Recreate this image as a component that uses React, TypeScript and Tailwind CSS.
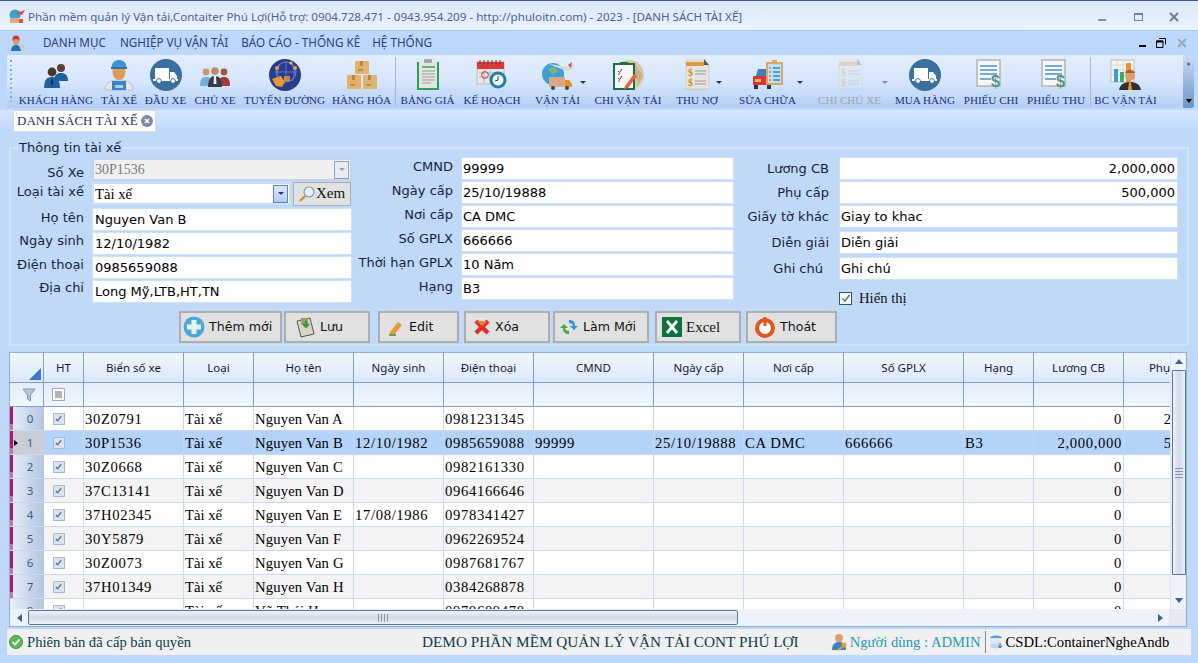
import type { ReactNode } from "react";

const tahoma = "font-['Noto_Sans',sans-serif]";
const verdana = "font-['DejaVu_Sans',sans-serif]";
const times = "font-['Liberation_Serif',serif]";

const Truck = () => (
  <svg viewBox="0 0 32 32" className="h-8 w-8">
    <circle cx="16" cy="16" r="16" fill="#3a6f9e" />
    <rect x="5" y="9" width="14" height="12" fill="#fff" />
    <path d="M20 13h4l3 4v4h-7z" fill="#fff" />
    <rect x="3" y="20" width="25" height="2" fill="#fff" />
    <circle cx="9" cy="22" r="2.4" fill="#fff" stroke="#3a6f9e" />
    <circle cx="23" cy="22" r="2.4" fill="#fff" stroke="#3a6f9e" />
  </svg>
);

const DocDollar = ({ pale }: { pale?: boolean }) => (
  <svg viewBox="0 0 32 32" className={pale ? "h-8 w-8 opacity-30" : "h-8 w-8"}>
    <ellipse cx="15" cy="30" rx="13" ry="1.5" fill="#c8c8c8" />
    <path d="M5 1h19l4 5v24H5z" fill="#e4e4e0" stroke="#cfcfcf" />
    <path d="M23 0l5 6h-5z" fill="#555" />
    <rect x="5" y="3" width="18" height="4" fill="#e29a38" />
    <text x="7" y="17" fontSize="10" fontWeight="700" fill="#d98a20">$</text>
    <text x="7" y="27" fontSize="10" fontWeight="700" fill="#d98a20">$</text>
    <path d="M14 12h11M14 15h11M14 22h11M14 25h11" stroke="#9a9a9a" />
  </svg>
);

const Receipt = () => (
  <svg viewBox="0 0 32 32" className="h-8 w-8">
    <rect x="2" y="1" width="23" height="26" fill="#f7f7f7" stroke="#b4b4b4" strokeWidth="1.5" />
    <path d="M5 7h17M5 11h17M5 15h17M5 20h11" stroke="#4a90d0" strokeWidth="1.6" />
    <text x="16" y="28" fontSize="16" fontWeight="700" fill="#4f9a86" fontFamily="Liberation Sans">$</text>
  </svg>
);

const toolIcons: Record<string, ReactNode> = {
  customer: (
    <svg viewBox="0 0 32 32" className="h-8 w-8">
      <circle cx="21" cy="9" r="4" fill="#5a4030" />
      <path d="M14 22c0-6 3-8 7-8s7 2 7 8z" fill="#1f5f9c" />
      <circle cx="12" cy="13" r="4.4" fill="#4a3528" />
      <path d="M4 29c0-8 3-11 8-11s8 3 8 11z" fill="#215f9e" />
      <path d="M12 18l-1.2 6 1.2 3 1.2-3z" fill="#16324f" />
    </svg>
  ),
  driver: (
    <svg viewBox="0 0 32 32" className="h-8 w-8">
      <path d="M2 31c0-7 5-10 14-10s14 3 14 10z" fill="#e6e6e6" stroke="#999" strokeWidth=".5" />
      <path d="M9 22h14v9H9z" fill="#3b83c4" />
      <rect x="12" y="26" width="8" height="3" fill="#fff" opacity=".6" />
      <ellipse cx="16" cy="13" rx="6.5" ry="8" fill="#dd9a58" />
      <path d="M8.5 9c0-6 4-8 7.500-8s7.500 2 7.500 8z" fill="#3f92d2" />
      <rect x="8" y="8" width="16" height="2" fill="#2a74b0" />
    </svg>
  ),
  truck: <Truck />,
  owner: (
    <svg viewBox="0 0 32 32" className="h-8 w-8">
      <circle cx="7" cy="13" r="3.4" fill="#c99570" />
      <path d="M1 27c0-7 2-9 6-9s6 2 6 9z" fill="#74aede" />
      <circle cx="25" cy="13" r="3.4" fill="#9a5a3a" />
      <path d="M19 27c0-7 2-9 6-9s6 2 6 9z" fill="#a83838" />
      <circle cx="16" cy="12" r="3.800" fill="#c08a64" />
      <path d="M9 28c0-8 3-11 7-11s7 3 7 11z" fill="#3a3a42" />
      <path d="M15 17h2l.5 8h-3z" fill="#eee" />
    </svg>
  ),
  route: (
    <svg viewBox="0 0 32 32" className="h-8 w-8">
      <circle cx="16" cy="16" r="16" fill="#2a3a8c" />
      <circle cx="17" cy="13" r="10" fill="none" stroke="#6f86d8" />
      <path d="M7 13h20M17 3v20M11 5c-3 6-3 11 0 17M23 5c3 6 3 11 0 17" stroke="#6f86d8" fill="none" strokeWidth=".8" />
      <circle cx="8" cy="9" r="2" fill="#e8a23a" />
      <circle cx="22" cy="4" r="1.600" fill="#f0c040" />
      <circle cx="26" cy="9" r="2" fill="#e8a23a" />
      <path d="M3 20l9-3 4 6-3 5-6-1z" fill="#e89a32" />
      <rect x="15" y="17" width="6" height="5" fill="#c98a3a" />
    </svg>
  ),
  goods: (
    <svg viewBox="0 0 32 32" className="h-8 w-8">
      <rect x="9" y="2" width="14" height="13" rx="1" fill="#e0b36e" />
      <rect x="1" y="16" width="14" height="14" rx="1" fill="#e6b066" />
      <rect x="17" y="16" width="14" height="14" rx="1" fill="#e0b36e" />
      <path d="M14 2h3v5h-3zM6 16h3v5H6zM22 16h3v5h-3z" fill="#b8864a" />
      <path d="M12 11h5M4 26h5M20 26h5" stroke="#8a6a3a" />
    </svg>
  ),
  price: (
    <svg viewBox="0 0 32 32" className="h-8 w-8">
      <rect x="5" y="3" width="22" height="28" fill="#2f9e58" />
      <rect x="7" y="2" width="18" height="27" fill="#e3e6e2" />
      <rect x="12" y="0" width="8" height="4" rx="1" fill="#a8a8a8" />
      <path d="M10 8h13" stroke="#2f9e58" strokeWidth="1.4" />
      <path d="M10 12h13M10 15h13M10 18h13M10 21h13M10 24h9" stroke="#9a9a9a" />
    </svg>
  ),
  plan: (
    <svg viewBox="0 0 32 32" className="h-8 w-8">
      <rect x="1" y="3" width="27" height="22" fill="#e8e8e8" stroke="#bbb" />
      <rect x="1" y="3" width="27" height="7" fill="#d83a3a" />
      <path d="M4 1v4M8 1v4M12 1v4M16 1v4M20 1v4M24 1v4" stroke="#7a2a2a" />
      <path d="M3 14h22M3 18h22M8 11v13M14 11v13" stroke="#b8b8b8" />
      <circle cx="9" cy="16" r="3.400" fill="none" stroke="#c83a3a" />
      <circle cx="22" cy="21" r="8.500" fill="#1f7f9c" />
      <circle cx="22" cy="21" r="5.500" fill="#f0f4f8" />
      <path d="M22 17v4l-3 1" stroke="#345" fill="none" />
    </svg>
  ),
  transport: (
    <svg viewBox="0 0 32 32" className="h-8 w-8">
      <circle cx="11" cy="15" r="11" fill="#3f9fd0" />
      <path d="M6 10l7-2 3 4-5 4z" fill="#7fb07a" />
      <path d="M6 5l22 3 4-4-1 6-6 2z" fill="#d8d8d8" />
      <path d="M26 6l4-3-1 6z" fill="#d8503a" />
      <rect x="7" y="18" width="16" height="10" fill="#d8a98a" />
      <path d="M23 21h4l3 4v3h-7z" fill="#e8901f" />
      <circle cx="11" cy="29" r="2" fill="#345" />
      <circle cx="25" cy="29" r="2" fill="#345" />
    </svg>
  ),
  expense: (
    <svg viewBox="0 0 32 32" className="h-8 w-8">
      <circle cx="17" cy="16" r="15" fill="#d9c7a2" />
      <path d="M22 4l9 12-4 9-8-14z" fill="#c2ab82" opacity=".7" />
      <rect x="2" y="5" width="20" height="25" fill="#f7f7f7" stroke="#1d6b48" strokeWidth="2" />
      <rect x="8" y="3" width="8" height="3" fill="#1d6b48" />
      <path d="M6 12l1.500 1.500L10 10M6 19l1.500 1.500L10 17" stroke="#444" fill="none" />
      <path d="M6 15h2M6 22h2" stroke="#d83a3a" />
      <path d="M13 27l9-12 3 2-9 12-4 1z" fill="#d8683a" />
    </svg>
  ),
  debt: <DocDollar />,
  repair: (
    <svg viewBox="0 0 32 32" className="h-8 w-8">
      <path d="M4 17l2-7h11v7z" fill="#3d7fc0" />
      <rect x="1" y="17" width="20" height="9" rx="1" fill="#d8323a" />
      <rect x="3" y="20" width="6" height="3" fill="#f0c040" />
      <rect x="2" y="26" width="4" height="4" fill="#333" />
      <rect x="15" y="26" width="4" height="4" fill="#333" />
      <rect x="14" y="3" width="17" height="23" rx="1" fill="#d9a860" />
      <rect x="16" y="5" width="13" height="19" fill="#bfe2f2" />
      <rect x="20" y="1" width="5" height="4" fill="#d9a860" />
      <path d="M21 9h7M21 13h7M21 17h7M21 21h7" stroke="#2a8ac8" strokeWidth="1.500" />
      <path d="M17 9h2M17 13h2M17 17h2M17 21h2" stroke="#e0782a" strokeWidth="1.500" />
    </svg>
  ),
  paleDoc: <DocDollar pale />,
  receipt: <Receipt />,
  report: (
    <svg viewBox="0 0 32 32" className="h-8 w-8">
      <rect x="1" y="1" width="23" height="22" fill="#f5f5f5" stroke="#bbb" />
      <path d="M1 6h23M1 11h23M1 16h23M7 1v22M13 1v22M19 1v22" stroke="#d8d8d8" />
      <rect x="4" y="10" width="4" height="13" fill="#3a9fd0" />
      <rect x="10" y="13" width="4" height="10" fill="#3fae5a" />
      <rect x="16" y="4" width="5" height="19" fill="#e8922a" />
      <circle cx="20" cy="17" r="5" fill="#d8a070" />
      <path d="M15 14c0-4 10-4 10 0z" fill="#a8601f" />
      <path d="M9 31c1-6 6-8 11-8s10 2 11 8z" fill="#2f2f33" />
      <path d="M19 23h2l1 8h-4z" fill="#e8922a" />
    </svg>
  ),
};

const tools = [
  { label: "KHÁCH HÀNG", icon: "customer", w: "w-[82px]" },
  { label: "TÀI XẾ", icon: "driver", w: "w-[44px]" },
  { label: "ĐẦU XE", icon: "truck", w: "w-[49px]" },
  { label: "CHỦ XE", icon: "owner", w: "w-[50px]" },
  { label: "TUYẾN ĐƯỜNG", icon: "route", w: "w-[89px]" },
  { label: "HÀNG HÓA", icon: "goods", w: "w-[65px]", sep: true },
  { label: "BẢNG GIÁ", icon: "price", w: "w-[61px]" },
  { label: "KẾ HOẠCH", icon: "plan", w: "w-[68px]" },
  { label: "VẬN TẢI", icon: "transport", w: "w-[63px]", arrow: "right-[3px]" },
  { label: "CHI VẬN TẢI", icon: "expense", w: "w-[78px]" },
  { label: "THU NỢ", icon: "debt", w: "w-[60px]", arrow: "right-[5px]" },
  { label: "SỬA CHỮA", icon: "repair", w: "w-[81px]", arrow: "right-[5px]" },
  { label: "CHI CHỦ XE", icon: "paleDoc", w: "w-[83px]", arrow: "right-[3px]", off: true },
  { label: "MUA HÀNG", icon: "truck", w: "w-[68px]" },
  { label: "PHIẾU CHI", icon: "receipt", w: "w-[64px]" },
  { label: "PHIẾU THU", icon: "receipt", w: "w-[66px]", sep: true },
  { label: "BC VẬN TẢI", icon: "report", w: "w-[67px]" },
];

const Input = ({ value, right, className = "" }: { value: string; right?: boolean; className?: string }) => (
  <div
    className={`flex h-[23px] items-center overflow-hidden border border-[#cfdff5] bg-white px-[2px] text-[13px] text-black ${right ? "justify-end" : ""} ${verdana} ${className}`}
  >
    {value}
  </div>
);

const Label = ({ children, className = "" }: { children: ReactNode; className?: string }) => (
  <div className={`flex h-[23px] items-center justify-end whitespace-nowrap text-[13px] text-[#16243c] ${verdana} ${className}`}>{children}</div>
);

const ComboArrow = ({ off }: { off?: boolean }) => (
  <div className={`flex h-[18px] w-[15px] items-center justify-center border ${off ? "border-[#8ea2c4] bg-[#e8edf4]" : "border-[#5a86c4] bg-gradient-to-b from-[#dbe8fa] to-[#b4cdf0]"}`}>
    <span className={`h-0 w-0 border-x-[3px] border-t-[3px] border-x-transparent ${off ? "border-t-[#a0a0a0]" : "border-t-[#1f3a7a]"}`} />
  </div>
);

const Btn = ({ w, icon, children, serif }: { w: string; icon: ReactNode; children: ReactNode; serif?: boolean }) => (
  <div className={`flex h-[32px] items-center gap-[4px] border-2 border-[#adadad] bg-[#e1e1e1] text-[#111] ${serif ? `${times} text-[15px]` : `${verdana} text-[12.600px]`} ${w}`}>
    {icon}
    <span className="whitespace-nowrap">{children}</span>
  </div>
);

const columns = ["Biển số xe", "Loại", "Họ tên", "Ngày sinh", "Điện thoại", "CMND", "Ngày cấp", "Nơi cấp", "Số GPLX", "Hạng", "Lương CB", "Phụ cấp"];
const gridCols = "grid grid-cols-[34px_40px_100px_70px_100px_90px_90px_120px_90px_100px_120px_70px_90px_94px]";

const rows = [
  ["30Z0791", "Tài xế", "Nguyen Van A", "", "0981231345", "", "", "", "", "", "0", "200,000"],
  ["30P1536", "Tài xế", "Nguyen Van B", "12/10/1982", "0985659088", "99999", "25/10/19888", "CA DMC", "666666", "B3", "2,000,000", "500,000"],
  ["30Z0668", "Tài xế", "Nguyen Van C", "", "0982161330", "", "", "", "", "", "0", ""],
  ["37C13141", "Tài xế", "Nguyen Van D", "", "0964166646", "", "", "", "", "", "0", ""],
  ["37H02345", "Tài xế", "Nguyen Van E", "17/08/1986", "0978341427", "", "", "", "", "", "0", ""],
  ["30Y5879", "Tài xế", "Nguyen Van F", "", "0962269524", "", "", "", "", "", "0", ""],
  ["30Z0073", "Tài xế", "Nguyen Van G", "", "0987681767", "", "", "", "", "", "0", ""],
  ["37H01349", "Tài xế", "Nguyen Van H", "", "0384268878", "", "", "", "", "", "0", ""],
  ["", "Tài xế", "Vũ Thái H", "", "0979689478", "", "", "", "", "", "0", ""],
];

const GridCheck = () => (
  <span className="flex h-[12px] w-[12px] items-center justify-center border border-[#a3b8d8] bg-[#dbe3ef]">
    <svg viewBox="0 0 10 10" className="h-[9px] w-[9px]">
      <path d="M2 5.500l2 2 4-5" fill="none" stroke="#66738a" strokeWidth="1.400" />
    </svg>
  </span>
);

const headCell = "flex items-center justify-center border-r border-b border-[#819ec8] bg-gradient-to-b from-[#f1f6fd] to-[#dce8f8] text-[11.500px] text-[#111b33] whitespace-nowrap overflow-hidden";
const filterCell = "border-r border-b border-[#819ec8] bg-gradient-to-b from-[#e4edf9] to-[#f1f6fd]";

const DataGrid = () => (
  <div className={`flex-1 overflow-hidden bg-white ${tahoma}`}>
    <div className={`${gridCols} w-max grid-rows-[30px_24px] auto-rows-[24px]`}>
      {/* header */}
      <div className="relative border-r border-b border-[#819ec8] bg-gradient-to-b from-[#f1f6fd] to-[#dce8f8]">
        <span className="absolute right-[2px] bottom-[2px] h-0 w-0 border-b-[12px] border-l-[12px] border-b-[#3a78c8] border-l-transparent" />
      </div>
      <div className={headCell}>HT</div>
      {columns.map((c) => (
        <div key={c} className={headCell}>{c}</div>
      ))}
      {/* filter row */}
      <div className={`${filterCell} flex items-center justify-center pl-1`}>
        <svg viewBox="0 0 14 14" className="h-[14px] w-[14px]">
          <path d="M1 1h12L8.500 7v6l-3-2V7z" fill="#b8c6da" stroke="#7f93ad" />
        </svg>
      </div>
      <div className={`${filterCell} flex items-center justify-center pr-[10px]`}>
        <span className="flex h-[13px] w-[13px] items-center justify-center border border-[#a8a8a8] bg-white">
          <span className="h-[7px] w-[7px] bg-[#b4b4b4]" />
        </span>
      </div>
      {columns.map((c) => (
        <div key={c} className={filterCell} />
      ))}
      {/* data */}
      {rows.map((r, i) => {
        const selected = i === 1;
        const bg = selected ? "bg-[#b3d4f8]" : i % 2 === 1 ? "bg-[#f3f3f3]" : "bg-white";
        return [
          <div
            key={`h${i}`}
            className={`relative flex items-center justify-center border-b border-[#c6d8f3] pl-[6px] text-[11.500px] text-[#38598c] ${selected ? "bg-[#c9ced6]" : "bg-gradient-to-r from-[#e9f0fa] to-[#b3c5e0]"}`}
          >
            {i < 8 && <span className="absolute top-0 bottom-[6px] left-0 w-[3px] bg-[#b5185f]" />}
            {i < 8 && <span className="absolute bottom-0 left-0 h-[6px] w-[3px] bg-[#c77a9e]" />}
            {selected && <span className="absolute top-[9px] left-[4px] h-0 w-0 border-y-[3.500px] border-l-[4px] border-y-transparent border-l-black" />}
            {i}
          </div>,
          <div key={`c${i}`} className={`flex items-center justify-center border-r border-b border-[#c6d8f3] pr-[10px] ${bg}`}>
            <GridCheck />
          </div>,
          ...r.map((v, j) => (
            <div
              key={`${i}-${j}`}
              className={`flex items-center overflow-hidden border-r border-b border-[#c6d8f3] px-[1px] pt-[1px] text-[14.670px] whitespace-nowrap text-black ${times} ${j === 1 ? "" : j === 2 ? "tracking-[0.15px]" : "tracking-[0.65px]"} ${j >= 10 ? "justify-end" : ""} ${bg}`}
            >
              {v}
            </div>
          )),
        ];
      })}
    </div>
  </div>
);

const HeaderArrow = ({ className }: { className: string }) => <span className={`h-0 w-0 ${className}`} />;

const VScroll = () => (
  <div className="flex w-[16px] flex-col items-center border-l border-[#dbe4f2] bg-[#eef3fb]">
    <div className="flex h-[17px] items-center">
      <HeaderArrow className="border-x-[4px] border-b-[5px] border-x-transparent border-b-[#3f5f8f]" />
    </div>
    <div className="flex h-[205px] w-[14px] flex-col items-center justify-center gap-[2px] rounded-t-[1px] border border-[#5e7197] bg-gradient-to-r from-[#eef2f8] via-[#d3dae8] to-[#eef2f8]">
      <span className="h-[1px] w-[8px] bg-[#8a94a8]" />
      <span className="h-[1px] w-[8px] bg-[#8a94a8]" />
      <span className="h-[1px] w-[8px] bg-[#8a94a8]" />
      <span className="h-[1px] w-[8px] bg-[#8a94a8]" />
    </div>
    <div className="flex-1" />
    <div className="flex h-[17px] items-center">
      <HeaderArrow className="border-x-[4px] border-t-[5px] border-x-transparent border-t-[#3f5f8f]" />
    </div>
  </div>
);

const HScroll = () => (
  <div className="flex h-[17px] items-center bg-[#eef3fb]">
    <div className="flex w-[18px] justify-center">
      <HeaderArrow className="border-y-[4px] border-r-[5px] border-y-transparent border-r-[#3f5f8f]" />
    </div>
    <div className="flex h-[15px] w-[710px] items-center justify-center gap-[2px] rounded-[2px] border border-[#5e7197] bg-gradient-to-b from-[#eef2f8] via-[#d3dae8] to-[#eef2f8]">
      <span className="h-[8px] w-[1px] bg-[#8a94a8]" />
      <span className="h-[8px] w-[1px] bg-[#8a94a8]" />
      <span className="h-[8px] w-[1px] bg-[#8a94a8]" />
      <span className="h-[8px] w-[1px] bg-[#8a94a8]" />
    </div>
    <div className="flex-1" />
    <div className="flex w-[18px] justify-center">
      <HeaderArrow className="border-y-[4px] border-l-[5px] border-y-transparent border-l-[#3f5f8f]" />
    </div>
    <div className="h-full w-[17px] bg-[#e4e9f1]" />
  </div>
);

export default function App() {
  return (
    <div className="flex h-[663px] w-[1198px] flex-col overflow-hidden border-t border-[#3c5a8c] bg-[#bcd8fc]">
      {/* title bar */}
      <div className={`flex h-[29px] items-center bg-gradient-to-b from-[#dbe9fa] to-[#eaf2fd] pt-[3px] pl-[8px] text-[11.620px] text-[#4f5f92] ${tahoma}`}>
        <svg viewBox="0 0 18 16" className="mr-[2px] h-[16px] w-[18px]">
          <circle cx="7" cy="6" r="5.500" fill="#3f9fd0" />
          <path d="M8 4l9-3-3 5z" fill="#d8503a" />
          <rect x="2" y="9" width="9" height="5" fill="#d8a98a" />
          <rect x="11" y="10" width="4" height="4" fill="#e8503a" />
        </svg>
        <span className="whitespace-nowrap">Phần mềm quản lý Vận tải,Contaiter Phú Lợi(Hỗ trợ: 0904.728.471 - 0943.954.209 - http://phuloitn.com) - 2023 - [DANH SÁCH TÀI XẾ]</span>
        <div className="ml-auto flex items-center">
          <span className="mt-[5px] mr-[28px] h-[2px] w-[8px] bg-[#7f8fa8]" />
          <span className="mr-[26px] h-[8px] w-[9px] border border-t-[2px] border-[#6c7fa4] bg-[#e4edfa]" />
          <svg viewBox="0 0 10 10" className="mr-[19px] h-[10px] w-[10px]">
            <path d="M1 1l8 8M9 1l-8 8" stroke="#6c7a94" strokeWidth="2" />
          </svg>
        </div>
      </div>
      {/* menu */}
      <div className={`flex h-[25px] items-center border-t border-[#a9c9ee] bg-[#bcd8fc] pl-[9px] text-[11.700px] text-[#2c3e78] ${tahoma}`}>
        <svg viewBox="0 0 16 16" className="mr-[18px] h-[16px] w-[16px]">
          <circle cx="7" cy="4" r="3.500" fill="#d8323a" />
          <circle cx="7" cy="7" r="3" fill="#d89a68" />
          <path d="M2 16c0-4 2-6 5-6s5 2 5 6z" fill="#2f6fb0" />
          <circle cx="13" cy="12" r="2.500" fill="#c8c8c8" />
        </svg>
        <span>DANH MỤC</span>
        <span className="ml-[14px]">NGHIỆP VỤ VẬN TẢI</span>
        <span className="ml-[13px]">BÁO CÁO - THỐNG KÊ</span>
        <span className="ml-[12px]">HỆ THỐNG</span>
        <div className="ml-auto flex items-center">
          <span className="mt-[6px] mr-[10px] h-[2px] w-[7px] bg-black" />
          <svg viewBox="0 0 10 10" className="mr-[11px] h-[10px] w-[10px]">
            <path d="M3 .5h6.500v6M.5 3h6.500v6.500H.5z" fill="none" stroke="#000" />
            <path d="M.5 3.500h6.500" stroke="#000" strokeWidth="2" />
          </svg>
          <svg viewBox="0 0 10 10" className="mr-[11px] h-[10px] w-[10px]">
            <path d="M1 1l8 8M9 1l-8 8" stroke="#9aa6b4" strokeWidth="2" />
          </svg>
        </div>
      </div>
      {/* toolbar */}
      <div className="flex h-[55px] pl-[7px]">
        <div className={`flex h-[53px] w-[1176px] items-stretch rounded-br-[3px] bg-gradient-to-b from-[#e3eeff] via-[#d6e6fc] to-[#b3cff5] ${times}`}>
          <div className="flex w-[8px] flex-col items-center gap-[3px] pt-[5px]">
            {[0, 1, 2, 3, 4, 5, 6, 7, 8, 9].map((d) => (
              <span key={d} className="h-[1.500px] w-[2px] bg-[#7f9ccb]" />
            ))}
          </div>
          {tools.map((t) => (
            <div key={t.label} className="flex">
              <div className={`relative flex flex-col items-center pt-[4px] ${t.w}`}>
                {toolIcons[t.icon]}
                <span className={`mt-[2px] text-[11.100px] leading-[14px] whitespace-nowrap ${t.off ? "text-[#a0a4aa]" : "text-[#1b2f78]"}`}>{t.label}</span>
                {t.arrow && (
                  <span className={`absolute top-[26px] h-0 w-0 border-x-[3px] border-t-[3px] border-x-transparent ${t.off ? "border-t-[#8a8a8a]" : "border-t-[#1f3a7a]"} ${t.arrow}`} />
                )}
              </div>
              {t.sep && <span className="mx-[1px] my-[2px] w-[1px] bg-[#a8b8cc]" />}
            </div>
          ))}
        </div>
        <div className="flex h-[53px] w-[11px] flex-col items-center justify-between rounded-r-[3px] bg-gradient-to-b from-[#c8dcf6] to-[#6f94c8] py-[5px]">
          <span className="text-[7px] leading-[8px] text-black">»</span>
          <span className="h-0 w-0 border-x-[3px] border-t-[4px] border-x-transparent border-t-black" />
        </div>
      </div>
      {/* tab strip */}
      <div className="flex h-[22px] bg-gradient-to-b from-[#d8e7fe] to-[#bcd8fc] pl-[13px]">
        <div className={`flex h-[22px] w-[143px] items-center gap-[3px] border border-[#cfdcec] bg-white pl-[3px] text-[13px] text-[#16305e] ${times}`}>
          <span className="whitespace-nowrap">DANH SÁCH TÀI XẾ</span>
          <svg viewBox="0 0 12 12" className="h-[12px] w-[12px] shrink-0">
            <circle cx="6" cy="6" r="6" fill="#7c8aa8" />
            <path d="M4 4l4 4M8 4l-4 4" stroke="#fff" strokeWidth="1.500" />
          </svg>
        </div>
      </div>
      {/* form */}
      <div className="h-[220px] bg-[#c1d9f8] px-[9px] pt-[15px]">
        <div className="relative h-[199px] w-[1180px] border-2 border-[#d3e2f7] pt-[8px]">
          <span className={`absolute -top-[11px] left-[7px] bg-[#c1d9f8] px-[1px] text-[13px] text-[#16243c] ${verdana}`}>Thông tin tài xế</span>
          <div className="flex h-[154px]">
            {/* left */}
            <div className="mt-[1px] grid w-[341px] grid-cols-[73px_260px] content-start gap-x-[8px] gap-y-[1px]">
              <Label className="pt-[6px]">Số Xe</Label>
              <div className="flex h-[23px] items-center justify-between border-2 border-[#c3d4ec] bg-[#f0f0f0] px-[1px]">
                <span className={`text-[14px] text-[#7a7a7a] ${times}`}>30P1536</span>
                <ComboArrow off />
              </div>
              <Label className="pb-[4px]">Loại tài xế</Label>
              <div className="flex h-[23px] items-center gap-[2px]">
                <div className="flex h-[23px] w-[199px] items-center justify-between border-2 border-[#cfdff5] bg-white px-[1px]">
                  <span className={`text-[14.670px] text-black ${times}`}>Tài xế</span>
                  <ComboArrow />
                </div>
                <div className={`flex h-[24px] w-[58px] items-center justify-center gap-[1px] border border-[#adadad] bg-[#e1e1e1] text-[15px] text-[#111] ${times}`}>
                  <svg viewBox="0 0 16 16" className="h-[16px] w-[16px]">
                    <circle cx="10" cy="6" r="5" fill="#e8f2fb" stroke="#7f97b0" strokeWidth="1.200" />
                    <path d="M6 10l-5 5" stroke="#c8923a" strokeWidth="2.200" />
                  </svg>
                  Xem
                </div>
              </div>
              <Label className="mt-[2px] pb-[4px]">Họ tên</Label>
              <Input value="Nguyen Van B" className="mt-[2px]" />
              <Label className="pb-[6px]">Ngày sinh</Label>
              <Input value="12/10/1982" />
              <Label className="pb-[6px]">Điện thoại</Label>
              <Input value="0985659088" />
              <Label className="pb-[8px]">Địa chỉ</Label>
              <Input value="Long Mỹ,LTB,HT,TN" />
            </div>
            {/* middle */}
            <div className="ml-[6px] grid grid-cols-[95px_273px] content-start gap-x-[8px] gap-y-[1px]">
              <Label className="pb-[4px]">CMND</Label>
              <Input value="99999" className="pl-[1px]" />
              <Label className="pb-[4px]">Ngày cấp</Label>
              <Input value="25/10/19888" className="pl-[1px]" />
              <Label className="pb-[4px]">Nơi cấp</Label>
              <Input value="CA DMC" className="pl-[1px]" />
              <Label className="pb-[4px]">Số GPLX</Label>
              <Input value="666666" className="pl-[1px]" />
              <Label className="pb-[4px]">Thời hạn GPLX</Label>
              <Input value="10 Năm" className="pl-[1px]" />
              <Label className="pb-[4px]">Hạng</Label>
              <Input value="B3" className="pl-[1px]" />
            </div>
            {/* right */}
            <div className="grid grid-cols-[95px_339px] content-start gap-x-[10px] gap-y-[1px]">
              <Label>Lương CB</Label>
              <Input value="2,000,000" right />
              <Label>Phụ cấp</Label>
              <Input value="500,000" right />
              <Label>Giấy tờ khác</Label>
              <Input value="Giay to khac" className="pl-[1px]" />
              <Label className="mt-[2px]">Diễn giải</Label>
              <Input value="Diễn giải" className="mt-[2px] pl-[1px]" />
              <Label className="mt-[2px] pr-[6px]">Ghi chú</Label>
              <Input value="Ghi chú" className="mt-[2px] pl-[1px]" />
              <div />
              <div className={`mt-[6px] flex items-center gap-[7px] text-[14.670px] text-[#111] ${times}`}>
                <span className="flex h-[13px] w-[13px] items-center justify-center border border-[#2a5a50] bg-[#f5f5f5]">
                  <svg viewBox="0 0 10 10" className="h-[10px] w-[10px]">
                    <path d="M1.500 5.500l2.500 2.500 4.500-6" fill="none" stroke="#666" strokeWidth="1.300" />
                  </svg>
                </span>
                Hiển thị
              </div>
            </div>
          </div>
          {/* action buttons */}
          <div className="ml-[168px] flex">
            <Btn w="w-[103px] pl-[2px]" icon={<svg viewBox="0 0 22 22" className="h-[22px] w-[22px]"><circle cx="11" cy="11" r="10.500" fill="#4aa8d8" /><path d="M8.500 4h5v4.500H18v5h-4.500V18h-5v-4.500H4v-5h4.500z" fill="#e8f2f8" /></svg>}>Thêm mới</Btn>
            <div className="w-[2px]" />
            <Btn w="w-[86px] gap-[4px] pl-[8px]" icon={<svg viewBox="0 0 22 22" className="h-[22px] w-[22px]"><path d="M3 5l13-3 4 16-13 3z" fill="#d5d5c8" stroke="#555" /><rect x="7" y="2" width="7" height="7" fill="#9a9a6a" /><path d="M12 5v6M9 8l3 3 3-3" stroke="#2e9e3a" strokeWidth="2" fill="none" /></svg>}>Lưu</Btn>
            <div className="w-[8px]" />
            <Btn w="w-[81px] gap-[2px] pl-[7px]" icon={<svg viewBox="0 0 18 18" className="h-[18px] w-[18px]"><path d="M3 14l8-10 4 3-8 10-4 1z" fill="#e89a3a" /><path d="M2 17h7" stroke="#6f9e3a" strokeWidth="2" /></svg>}>Edit</Btn>
            <div className="w-[5px]" />
            <Btn w="w-[86px] gap-[0px] pl-[7px]" icon={<svg viewBox="0 0 18 18" className="h-[18px] w-[18px]"><path d="M3 3l12 12M15 3L3 15" stroke="#e02f2f" strokeWidth="4.500" /><path d="M4 3l5 5 5-5" fill="#e8843a" /></svg>}>Xóa</Btn>
            <div className="w-[3px]" />
            <Btn w="w-[96px] gap-[2px] pl-[4px]" icon={<svg viewBox="0 0 20 20" className="h-[20px] w-[20px]"><path d="M10 3c4 0 6 2 6 6h3l-4 4-4-4h3c0-2-2-3-4-3z" fill="#2f8fd8" /><path d="M10 17c-4 0-6-2-6-6H1l4-4 4 4H6c0 2 2 3 4 3z" fill="#3fae4a" /></svg>}>Làm Mới</Btn>
            <div className="w-[6px]" />
            <Btn serif w="w-[86px] gap-[2px] pl-[5px]" icon={<svg viewBox="0 0 20 20" className="h-[20px] w-[20px]"><rect width="20" height="20" fill="#0f7040" /><path d="M5 4l10 12M15 4L5 16" stroke="#fff" strokeWidth="2.800" /></svg>}>Excel</Btn>
            <div className="w-[5px]" />
            <Btn w="w-[91px] gap-[3px] pl-[6px]" icon={<svg viewBox="0 0 22 22" className="h-[22px] w-[22px]"><circle cx="11" cy="12" r="8" fill="#fff" stroke="#e0561f" strokeWidth="4" /><rect x="9.500" y="1" width="3" height="9" fill="#e0561f" /></svg>}>Thoát</Btn>
          </div>
        </div>
      </div>
      {/* grid */}
      <div className="flex bg-[#c1d9f8] pl-[9px]">
        <div className="flex h-[275px] w-[1178px] flex-col border border-[#8fb0d8] bg-white">
          <div className="flex min-h-0 flex-1">
            <DataGrid />
            <VScroll />
          </div>
          <HScroll />
        </div>
      </div>
      {/* status bar */}
      <div className="flex h-[28px] bg-[#bcd8fc] px-[7px] pt-[2px]">
        <div className={`flex h-[26px] w-full items-center bg-[#f0f0f0] pl-[2px] text-[14.670px] text-[#0e3c4a] ${times}`}>
          <svg viewBox="0 0 14 14" className="mr-[4px] h-[14px] w-[14px]">
            <circle cx="7" cy="7" r="6.500" fill="#5cb85c" stroke="#4a8a3a" />
            <path d="M3.500 7l2.500 2.500 4.500-5" fill="none" stroke="#fff" strokeWidth="1.800" />
          </svg>
          <span className="whitespace-nowrap">Phiên bản đã cấp bản quyền</span>
          <span className="ml-[231px] whitespace-nowrap text-[15.250px]">DEMO PHẦN MỀM QUẢN LÝ VẬN TẢI CONT PHÚ LỢI</span>
          <svg viewBox="0 0 18 18" className="ml-[32px] h-[18px] w-[18px]">
            <circle cx="8" cy="5" r="4" fill="#d8a070" />
            <path d="M1 17c0-6 3-8 7-8s7 2 7 8z" fill="#3f7fc0" />
            <circle cx="13" cy="12" r="2.500" fill="#e8a23a" />
            <path d="M11 14l-4 3" stroke="#e8a23a" strokeWidth="2" />
          </svg>
          <span className="ml-[1px] whitespace-nowrap text-[#2a9ab0]">Người dùng : ADMIN</span>
          <span className="mr-[3px] ml-[4px] h-[22px] w-[1px] bg-[#808890]" />
          <svg viewBox="0 0 14 14" className="h-[14px] w-[14px]">
            <ellipse cx="7" cy="3" rx="6" ry="2.500" fill="#5a9ed8" />
            <rect x="1" y="3" width="12" height="8" fill="#dfe6ee" />
            <ellipse cx="7" cy="11" rx="6" ry="2.500" fill="#c8d2de" />
            <path d="M11 8v5M9 11l2 2 2-2" stroke="#2f6fb0" fill="none" />
          </svg>
          <span className="ml-[3px] whitespace-nowrap text-black">CSDL:ContainerNgheAndb</span>
        </div>
      </div>
    </div>
  );
}
